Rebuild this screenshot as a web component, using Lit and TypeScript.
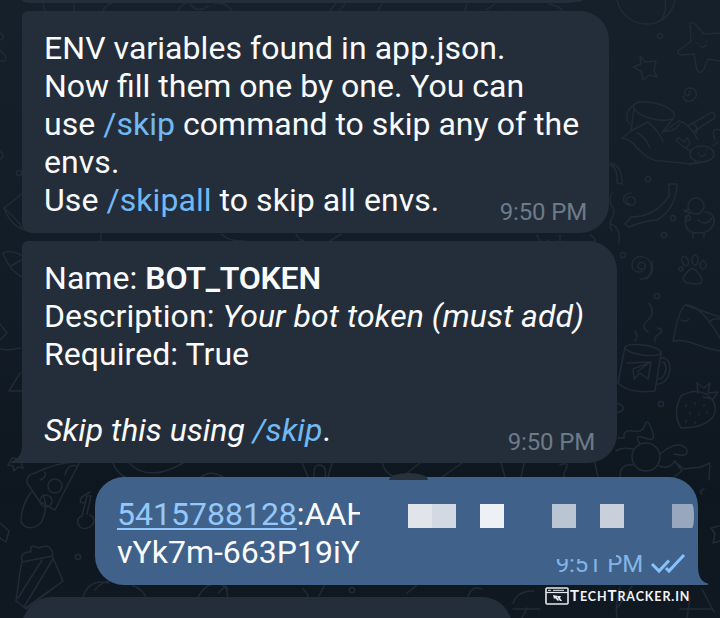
import { LitElement, html, css, svg } from "lit";
import { customElement } from "lit/decorators.js";

/** Faint line-art wallpaper behind the conversation. */
@customElement("chat-wallpaper")
class ChatWallpaper extends LitElement {
  static styles = css`
    :host { display: block; width: 720px; height: 618px; }
    svg { display: block; }
    .lines { fill: none; stroke: #202b37; stroke-width: 1.5; stroke-linecap: round; stroke-linejoin: round; }
  `;
  render() {
    const dots = [[660,36],[688,218],[664,235],[648,179],[673,218],[657,296],[661,404],[623,255],[78,557],[19,173],[352,590]];
    return html`<svg width="720" height="618" viewBox="0 0 720 618">
      <g class="lines">
        ${dots.map(([x, y]) => svg`<circle cx=${x} cy=${y} r="2.6"/>`)}
        <!-- planet and stars -->
        <path d="M617 0C624 31 668 33 675 0M665 0Q667 12 661 20"/>
        <path d="M690 23q2-2 5 1l9 10 16-1M690 23l1 18-13 10q-1 4 4 4l12-1 3 16q4 5 7-1l4-10 12 2M697 43l1 1M706 41l1 1M700 46q3 3 6-1"/>
        <path d="M640 56l5 6 11-1-2 9 3 7-8-2-6 5-2-9-8-4 8-3z"/>
        <path d="M690 91a5 5 0 0 1-3 5c-4-2-3-8 3-8s9 8 3 12q-8 4-10-4"/>
        <!-- hat, whale and crab -->
        <ellipse cx="654" cy="111" rx="21" ry="8" transform="rotate(14 654 111)"/>
        <path d="M634 105c-8 5-10 14-4 19M634 108l-3 23M673 119l-10 12"/>
        <path d="M631 131l-9 7q10 2 15 10 13 14 25 13l20 2q14 2 25-2M631 131l17-9q12 10 15 20M637 133q8 3 13 15M662 133l17-12q10 2 19 19M663 131q10 2 17-7M688 126l24-14q7 4-2 9l-17 11M691 123q8 2 5 10"/>
        <ellipse cx="702" cy="154" rx="12" ry="8"/>
        <path d="M690 151l-6-4q-12-8-5-9l5 4 3-4q5 4 0 9M713 146l5-4M696 162l-6 3M698 153l1 0M706 150l1 0M700 156q4 1 5-2M715 140q-5-13 5-10"/>
        <!-- ribbons and duck -->
        <path d="M609 165q9 1 8 18l5 1q1-18-12-21M669 184v12q-14 21-38 21l-6 7 4 3q14-6 28-7 19-11 20-36zM630 204c-5-1-5-7 1-7s6 10-2 8-7-11 2-12"/>
        <path d="M612 193q-4 7 0 13t0 12 0 13M611 224q10 4 8 19"/>
        <circle cx="696" cy="206" r="8"/><path d="M689 209l-5 2 6 2M690 213c-9 8-4 21 8 20 18 1 22-20 7-21M698 220q8 7 14-2M693 233v5M704 233v4"/>
        <!-- spiral and paw -->
        <path d="M642 269q-5 0-4-4c2-5 8-2 7 2-2 8-14 6-13-3 1-10 17-10 19 1q2 14-11 14M652 261q3 12-6 18"/>
        <path d="M685 275q7-12 14-1 7 9-2 10l-10-1q-7-4-2-8"/><ellipse cx="685" cy="261" rx="3" ry="5" transform="rotate(-22 685 261)"/><ellipse cx="695" cy="260" rx="3" ry="5"/><ellipse cx="703" cy="265" rx="3" ry="4"/><circle cx="681" cy="269" r="2"/>
        <!-- narwhal fin -->
        <path d="M673 341q6-32 12-36 15-2 35 33M673 341q10-2 22 3t25 7M681 320q4 3 8-1M709 322q4-4 11-3M685 305l35 12"/>
        <!-- mug -->
        <ellipse cx="643" cy="350" rx="18" ry="5" transform="rotate(8 643 350)"/>
        <path d="M625 347l-7 36q10 11 37 8l6-38M661 358c14-2 11 28-5 26M662 362c7 1 4 17-4 17M627 363l24-1-3 17-8-6-6 6-1-10 16-6-12 9M648 332q-8-5 0-12t1-17M635 341q4-4 0-10M655 342q-2-4 4-8t-1-6"/>
        <!-- strawberry -->
        <path d="M681 396q13-8 25-2 14 10 7 23-9 11-32 11-9-15 0-32M698 393l-1-10 7 5 6-5-2 10 10-1-5 7-10-2"/>
        <path d="M686 405v1M695 403v1M704 405v1M690 413v1M699 414v1M707 412v1M686 421v1M695 422v1" />
        <!-- candy and unicorn -->
        <circle cx="646" cy="457" r="14"/><path d="M618 438h6q-1-9 9-7t12-6 7 5-7 8-5 6M633 449q-12-2-17 2M633 465q-13-2-13 12M660 454q17-14 26-6 5 10-12 6M659 466q10 4 16-5l7 10-8 6M674 461l10 8 17-2 9-4-1 17M616 403q8 2 7 6t-9 3"/>
        <!-- left edge doodles -->
        <path d="M0 33q7 4 0 7M0 50q12 12 0 11M0 151q6 5 0 8M4 208l19-15M4 208q8 22 29 24M4 208q15 13 18 20M3 253q7-4 20 3M3 253q6 17 20 25M11 266l10-6M0 324l7 9-7 7M0 349q10 2 20-1M20 373L9 391h13"/>
        <path d="M12 458l-4 7 5 1 1 5 4-4 5 1-2-6 2-4-6 1z"/>
        <path d="M27 483q-1-8 8-10 25-12 45-11-10 18-25 48l-15-8-13-19M40 480q7-3 5-8M65 475q3-12 12-9"/>
        <circle cx="55" cy="486" r="7"/><circle cx="46" cy="501" r="6"/>
        <path d="M31 492q-10 14-10 30 7 11 20 1 8-16 2-28M82 516c-8 2-4 15 5 12 8-2 9-10 3-13M82 516l5-20 4 0-4 18M86 502q-9 3-4-5l8-5M0 523l9 8-3 11-6-4"/>
        <path d="M22 562q-2-11 9-10-2-9 8-4 14-6 14 10l10 23-37 28-10-8 4-29zM22 562l31-6M18 598l24-38M24 607l29-48M63 581l-38 27"/>
        <path d="M83 597q6-19 26-14M95 590q10-13 25-7M132 585q13 5 14 14M198 597q13-22 30-8M218 593l8-7 2 12M303 589q5 4 5 8M324 586l-6 12"/>
        <!-- strips between messages -->
        <path d="M43 4l2 7M74 4v10M103 11q2-6 9-8M178 11q3-9 15-9M190 4q8 10 18 2M214 3q13-1 18 8M330 11l6-8M345 4l-6 7M378 10l4-6M467 4l-2 7M486 10l9-6M549 4q10 2 14 7M101 233v9M221 234q9 8 24 7M296 234q4 8 8 6M341 234l-11 7M537 235q4 12 12 5M560 235v6M590 235q7 3 4 8"/>
        <path d="M113 463q7 19 32 17M129 463q20 20 54 0M200 478q10-9 23-1M302 463l6 14M332 463l-4 14M314 477q-1-13 6-12t5 12M382 463q4 12 14 14M420 463l-18 14M442 477l20-14M501 463l4 14M524 463l-3 14M560 465q10-4 6 4t-1 8M595 463l3 14"/>
        <path d="M407 593l10-8M468 597q3-12 14-8M513 603q5-13 21-12M513 609h27M522 618l5-10M620 587q-5 17-3 31M632 586l-16 24M690 597l-3 21M702 589l12 23M680 609h32M704 489q-6 2-2 5M719 526l-8 2 4 6-2 9 7-2"/>
      </g>
    </svg>`;
  }
}

@customElement("chat-bubble")
class ChatBubble extends LitElement {
  static properties = { out: { type: Boolean, reflect: true }, tail: { type: Boolean } };
  declare out: boolean;
  declare tail: boolean;
  static styles = css`
    :host {
      display: block; position: relative; box-sizing: border-box;
      padding: 18px 22px 14px; background: #242e3a; color: #fafbfd;
      border-radius: 6px 29px 29px 10px;
    }
    :host([out]) { background: #40628a; border-radius: 29px 29px 0 29px; }
    .tail { position: absolute; bottom: 0; left: -12px; width: 13px; height: 19px; fill: #242e3a; }
    :host([out]) .tail { left: auto; right: -11px; width: 12px; fill: #40628a; }
  `;
  render() {
    const shape = this.out
      ? html`<svg class="tail" viewBox="0 0 12 19"><path d="M0 0H1C1 10 4 16 11 17.5Q12.5 19 9 19H0Z"/></svg>`
      : html`<svg class="tail" viewBox="0 0 13 19"><path d="M13 0H12C12 10 9 15 1 17.500Q-1 19 3 19H13Z"/></svg>`;
    return html`${this.tail ? shape : ""}<slot></slot>`;
  }
}

@customElement("app-root")
class AppRoot extends LitElement {
  static styles = css`
    :host {
      display: block; position: relative; width: 720px; height: 618px; overflow: hidden;
      background: linear-gradient(180deg, #15202b 0%, #121c27 50%, #0e171f 80%, #101922 100%);
      font: 32px/38px Roboto, sans-serif; letter-spacing: 0.06px;
    }
    .wall { position: absolute; inset: 0; }
    .feed { position: relative; display: flex; flex-direction: column; align-items: flex-start; gap: 8px; padding-left: 22px; }
    .previous { width: 561px; height: 3px; padding: 0; border-radius: 0 0 24px 8px / 0 0 3px 3px; }
    .first { width: 587px; height: 222px; }
    .second { width: 595px; height: 222px; border-bottom-left-radius: 0; }
    .sent { width: 603px; height: 108px; margin: 6px 0 4px 73px; letter-spacing: 0; }
    .next { width: 490px; height: 60px; border-radius: 32px; }
    .line { height: 38px; white-space: pre; }
    .plain { letter-spacing: 0; }
    .tight { letter-spacing: 0.03px; }
    .line b { font-weight: 600; letter-spacing: -0.25px; }
    .cmd { color: #70b9f5; }
    .num { color: #94c8fc; text-decoration: underline; text-decoration-thickness: 2px; text-underline-offset: 3px; }
    .veil { position: absolute; left: 265px; top: 18px; width: 24px; height: 38px; background: #40628a; }
    .time { position: absolute; right: 22px; bottom: 7px; font-size: 24px; line-height: 28px; letter-spacing: -0.15px; color: #6d7b89; white-space: pre; }
    .sent .time { right: 55px; color: #83b4e5; }
    .cover { position: absolute; left: 455px; top: 73px; width: 66px; height: 9px; background: #40628a; }
    .ticks { position: absolute; right: 12px; top: 75px; width: 36px; height: 22px; fill: none; stroke: #87c2fb; stroke-width: 3; }
    .tiles { position: absolute; left: 313px; top: 27px; display: grid; grid-template-columns: repeat(12, 24px); grid-template-rows: 24px; }
    .t1 { grid-column: 1; background: #e1e5ea; }
    .t2 { grid-column: 2; background: #d3d9e3; }
    .t3 { grid-column: 4; background: #edf0f4; }
    .t4 { grid-column: 7; background: #b9c5d3; }
    .t5 { grid-column: 9; background: #c9d0dc; }
    .t6 { grid-column: 12; width: 22px; background: #98a7bd; border-radius: 0 2px 2px 0 / 0 12px 12px 0; }
    .chip { position: absolute; left: 294px; top: -4px; width: 39px; height: 7px; background: #28323c; border-radius: 50% 50% 0 0 / 100% 100% 0 0; }
    .mark { position: absolute; left: 545px; top: 586px; display: flex; align-items: center; gap: 1px; height: 20px; color: #f1f3f6; }
    .mark svg { width: 24px; height: 18px; flex: none; }
    .mark span { font: 700 12.5px/20px Lato, sans-serif; text-transform: uppercase; letter-spacing: 0.9px; white-space: pre; }
    .mark span::first-letter { font-size: 15px; }
    .mark big { font-size: 15px; line-height: 1; }
  `;
  render() {
    return html`
      <chat-wallpaper class="wall"></chat-wallpaper>
      <div class="feed">
        <chat-bubble class="previous"></chat-bubble>
        <chat-bubble class="first">
          <div class="line">ENV variables found in app.json.</div>
          <div class="line plain">Now fill them one by one. You can</div>
          <div class="line tight">use <span class="cmd">/skip</span> command to skip any of the</div>
          <div class="line">envs.</div>
          <div class="line">Use <span class="cmd">/skipall</span> to skip all envs.</div>
          <span class="time">9:50 PM</span>
        </chat-bubble>
        <chat-bubble class="second" tail>
          <div class="line">Name: <b>BOT_TOKEN</b></div>
          <div class="line">Description: <i>Your bot token (must add)</i></div>
          <div class="line">Required: True</div>
          <div class="line"></div>
          <div class="line plain"><i>Skip this using <span class="cmd">/skip</span></i>.</div>
          <span class="time">9:50 PM</span>
        </chat-bubble>
        <chat-bubble class="sent" out tail>
          <div class="line"><span class="num">5415788128</span>:AAH</div>
          <div class="line">vYk7m-663P19iY</div>
          <div class="veil"></div>
          <div class="chip"></div>
          <div class="tiles">
            <div class="t1"></div><div class="t2"></div><div class="t3"></div>
            <div class="t4"></div><div class="t5"></div><div class="t6"></div>
          </div>
          <span class="time">9:51 PM</span>
          <div class="cover"></div>
          <svg class="ticks" viewBox="0 0 36 22"><path d="M2 12l7 7 10-10.500M16 16l3 3L34 3"/></svg>
        </chat-bubble>
        <chat-bubble class="next"></chat-bubble>
      </div>
      <div class="mark">
        <svg viewBox="0 0 24 18"><rect x="1" y="1" width="22" height="16" rx="1" fill="#111c26" stroke="#e6e9ed" stroke-width="1.6"/><path d="M1 5.500h22" stroke="#e6e9ed" stroke-width="1.200"/><path d="M3 3.300h3M8 3.300h11" stroke="#e6e9ed" stroke-width="1"/><path d="M8 8l5 1-1 1 2 3-1 1-3-3-1 1zM12.500 9h3.500l-1 2 2 3h-2l-2-3z" fill="#e6e9ed"/></svg>
        <span>Tech<big>T</big>racker.in</span>
      </div>
    `;
  }
}
